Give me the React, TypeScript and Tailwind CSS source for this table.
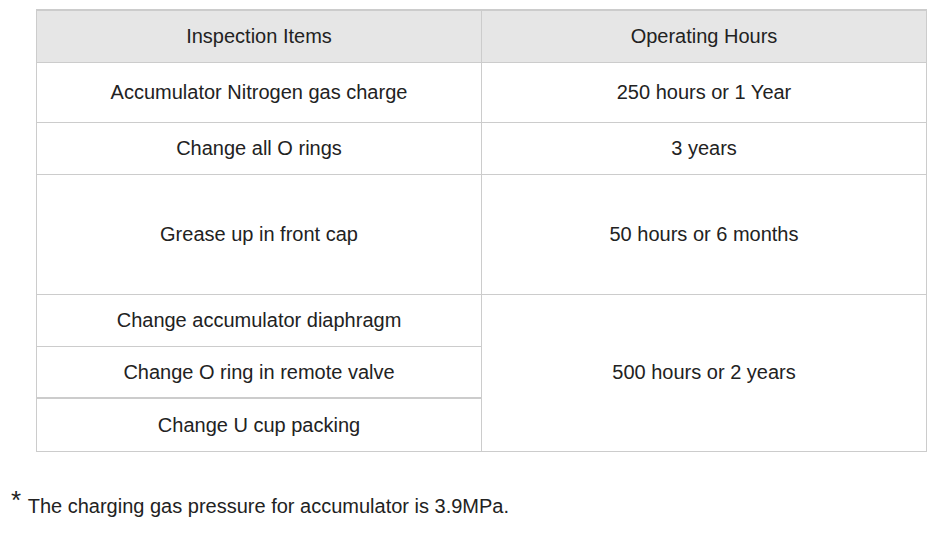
const ROWS = [
    { item: 'Accumulator Nitrogen gas charge', hours: '250 hours or 1 Year', h: 'h-[60px]' },
    { item: 'Change all O rings', hours: '3 years', h: 'h-[52px]' },
    { item: 'Grease up in front cap', hours: '50 hours or 6 months', h: 'h-[120px]' },
];

export default function App() {
    return (
        <div className="min-h-[536px] w-[939px] bg-white pt-[9px] font-['Liberation_Sans',Arial,sans-serif] text-[20px] text-[#222]">
            <table className="ml-[36px] w-[891px] table-fixed border-collapse text-center">
                <thead>
                    <tr className="h-[52px] border-t-2 border-[#cccccc] bg-[#e6e6e6]">
                        <th className="border border-t-2 border-[#cccccc] font-normal">Inspection Items</th>
                        <th className="border border-t-2 border-[#cccccc] font-normal">Operating Hours</th>
                    </tr>
                </thead>
                <tbody>
                    {ROWS.map((row) => (
                        <tr key={row.item} className={row.h}>
                            <td className="border border-[#cccccc]">{row.item}</td>
                            <td className="border border-[#cccccc]">{row.hours}</td>
                        </tr>
                    ))}
                    <tr className="h-[52px]">
                        <td className="border border-[#cccccc]">Change accumulator diaphragm</td>
                        <td rowSpan={3} className="border border-[#cccccc] pb-[2px]">
                            500 hours or 2 years
                        </td>
                    </tr>
                    <tr className="h-[52px]">
                        <td className="border border-b-2 border-[#cccccc]">Change O ring in remote valve</td>
                    </tr>
                    <tr className="h-[53px]">
                        <td className="border border-[#cccccc]">Change U cup packing</td>
                    </tr>
                </tbody>
            </table>

            <p className="mt-[44px] pl-[11px] leading-none">
                <sup className="relative top-[-4px] text-[26px]">*</sup> <span className="ml-[1px]">The charging gas pressure for accumulator is 3.9MPa.</span>
            </p>
        </div>
    );
}
